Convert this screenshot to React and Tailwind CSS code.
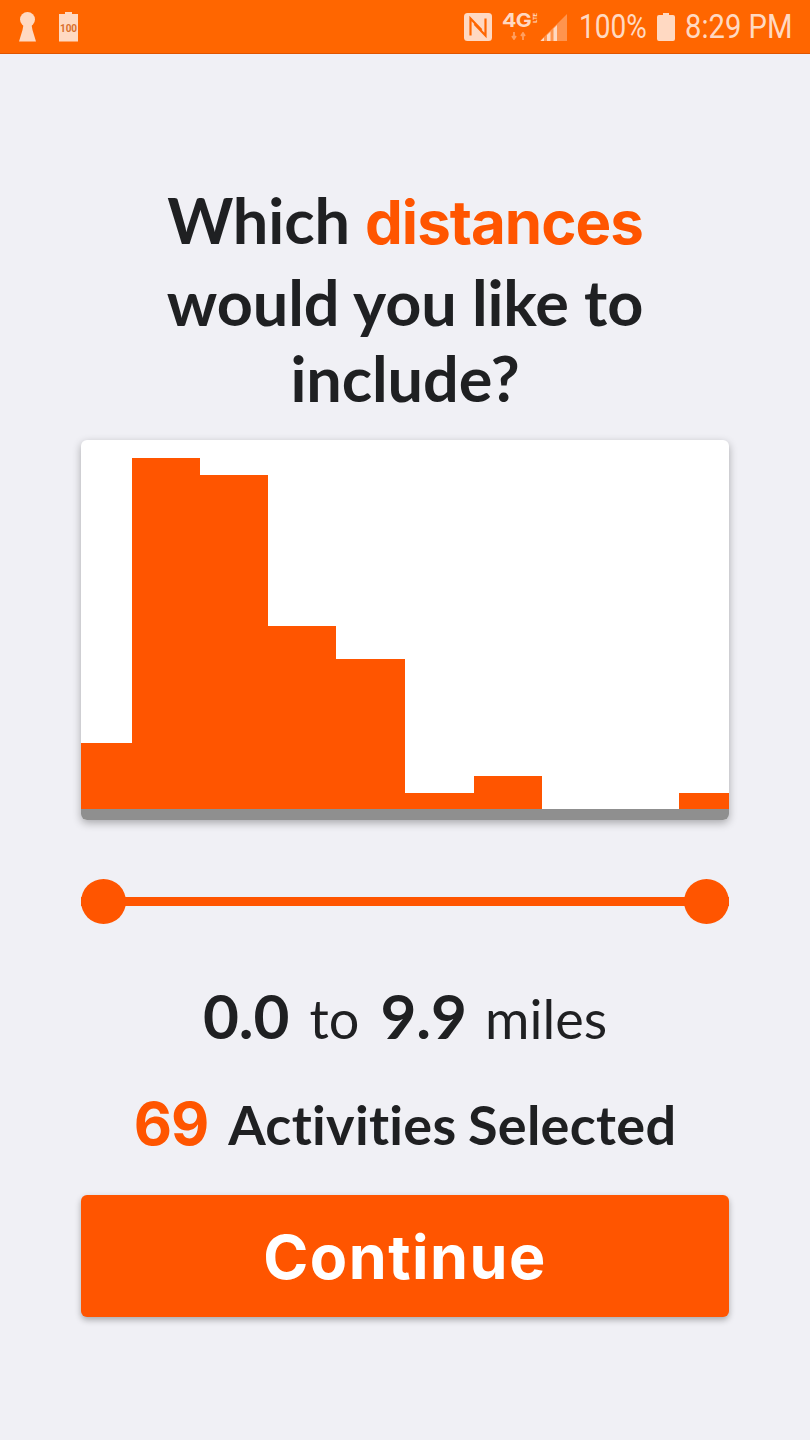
export default function App() {
  return (
    <div className="w-[810px] h-[1440px] bg-[#f0f0f5] flex flex-col font-['Lato',sans-serif] text-[#1f2022] [font-variant-ligatures:none]">
      <div className="h-[54px] bg-[#ff6600] border-b border-[#e05500] flex items-center justify-between pl-[19px] pr-[18px] text-[#ffd9c2]">
        <div className="flex items-center gap-[23px]">
          <svg width="17" height="30" viewBox="0 0 17 30" fill="#ffd9c2"><circle cx="8.5" cy="7.500" r="7.500" /><path d="M5 10h7l1.500 8 3.500 11.500H0l3.500-11.500z" /></svg>
          <svg width="19" height="30" viewBox="0 0 19 30"><path d="M6 0h7v2h6v27.500H0V2h6z" fill="#ffd9c2" /><text x="9.500" y="20" textAnchor="middle" fontSize="10" fontWeight="700" fill="#d9702e" fontFamily="Roboto, sans-serif">100</text></svg>
        </div>
        <div className="flex items-center font-['Roboto',sans-serif] text-[33px] leading-none">
          <svg width="28" height="28" viewBox="0 0 28 28" className="mr-[10px]"><rect x="0" y="0" width="28" height="28" rx="3.500" fill="#ffd9c2" /><path d="M6.500 22.500V5.500L17.500 17M21.500 5.500v17L10.500 11" fill="none" stroke="#ff6600" strokeWidth="2.200" /></svg>
          <div className="relative w-[36px] h-[28px] mr-[2px]">
            <div className="font-['Inter',sans-serif] text-[19px] font-bold leading-[16px] tracking-[-0.5px] scale-x-[1.12] origin-left">4G</div>
            <div className="absolute top-[0px] right-0 text-[6px] font-bold leading-[6px] [writing-mode:vertical-rl] rotate-180">LTE</div>
            <svg width="16" height="8" viewBox="0 0 16 8" className="absolute left-[9px] top-[19px] opacity-50"><path d="M3 0v5M1 4l2 3 2-3M12 8V3M10 4l2-3 2 3" fill="none" stroke="#ffd9c2" strokeWidth="1.800" /></svg>
          </div>
          <svg width="28" height="28" viewBox="0 0 28 28" className="mr-[11px]"><path d="M0 28L27 1v27z" fill="#ffd9c2" opacity=".4" /><path d="M1 28h3v-3.500l-3 3zM7 28h3.500V18.500L7 22zM13.500 28H17V12l-3.500 3.500z" fill="#ffd9c2" /></svg>
          <span className="w-[68px] whitespace-nowrap scale-x-[0.85] origin-left">100%</span>
          <svg width="18" height="28" viewBox="0 0 18 28" className="ml-[10px] mr-[10px]"><path d="M6 0h6v2h4a2 2 0 0 1 2 2v22a2 2 0 0 1-2 2H2a2 2 0 0 1-2-2V4a2 2 0 0 1 2-2h4z" fill="#ffd9c2" /></svg>
          <span className="w-[107px] whitespace-nowrap scale-x-[0.885] origin-left">8:29 PM</span>
        </div>
      </div>
      <h1 className="mt-[124px] w-full text-center text-[63px] font-bold leading-[76px] tracking-[-0.1px]">
        <div className="leading-[84px]">Which <span className="text-[#ff5500] font-['Inter',sans-serif] text-[60px] tracking-[-1px]">distances</span></div>
        <div>would you like to</div>
        <div>include?</div>
      </h1>
      <div className="mx-[81px] mt-[24px] h-[380px] bg-white rounded-[6px] shadow-[0_3px_8px_rgba(0,0,0,0.3)] overflow-hidden flex flex-col">
        <svg width="648" height="369" viewBox="0 0 648 369" className="block">
          <path d="M0 303H51V18H119V35H187V186H255V219H324V353H393V336H461V369H598V353H648V369H0z" fill="#ff5500" />
        </svg>
        <div className="h-[11px] bg-[#8f8f8f]" />
      </div>
      <div className="mx-[81px] mt-[59px] h-[45px] relative flex items-center">
        <div className="w-full h-[9px] bg-[#ff5500]" />
        <div className="absolute left-0 top-0 w-[45px] h-[45px] rounded-full bg-[#ff5500]" />
        <div className="absolute right-0 top-0 w-[45px] h-[45px] rounded-full bg-[#ff5500]" />
      </div>
      <div className="mt-[55px] flex items-baseline justify-center text-[54px] leading-[72px]">
        <span className="font-bold text-[62px]">0.0</span>
        <span className="ml-[20px]">to</span>
        <span className="ml-[21px] font-bold text-[62px]">9.9</span>
        <span className="ml-[18px]">miles</span>
      </div>
      <div className="mt-[35px] flex items-baseline justify-center text-[54px] font-bold leading-[68px]">
        <span className="text-[#ff5500] font-['Inter',sans-serif] text-[59px] tracking-[-1px]">69</span>
        <span className="ml-[20px] tracking-[0.3px] [word-spacing:-2px]">Activities Selected</span>
      </div>
      <button className="mx-[81px] mt-[36px] h-[122px] bg-[#ff5500] rounded-[6px] shadow-[0_3px_6px_rgba(0,0,0,0.3)] text-white font-['Inter',sans-serif] font-bold text-[61px] tracking-[1.5px] pt-[4px] flex items-center justify-center">
        Continue
      </button>
    </div>
  );
}
